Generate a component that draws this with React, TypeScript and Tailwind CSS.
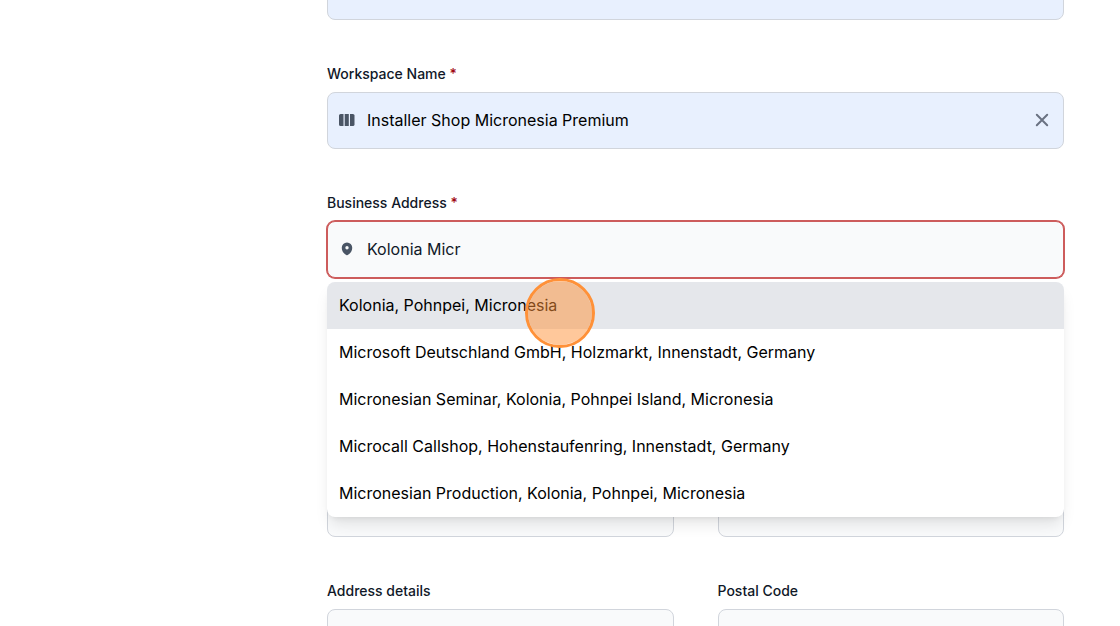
import { useState } from "react";
import type { ReactNode } from "react";
import clsx from "clsx";

const SUGGESTIONS = [
  "Kolonia, Pohnpei, Micronesia",
  "Microsoft Deutschland GmbH, Holzmarkt, Innenstadt, Germany",
  "Micronesian Seminar, Kolonia, Pohnpei Island, Micronesia",
  "Microcall Callshop, Hohenstaufenring, Innenstadt, Germany",
  "Micronesian Production, Kolonia, Pohnpei, Micronesia",
];

function ColumnsIcon() {
  return (
    <svg width="16" height="12" viewBox="0 0 16 12" fill="currentColor" aria-hidden="true">
      <path d="M1.6 0h2.9v12H1.6A1.6 1.6 0 0 1 0 10.4V1.6A1.6 1.6 0 0 1 1.6 0Z" />
      <path d="M5.7 0h4.1v12H5.7z" />
      <path d="M11 0h2.9a1.6 1.6 0 0 1 1.6 1.6v8.8a1.6 1.6 0 0 1-1.6 1.6H11z" />
    </svg>
  );
}

function PinIcon() {
  return (
    <svg width="16" height="15" viewBox="0 0 20 20" fill="currentColor" aria-hidden="true">
      <path
        fillRule="evenodd"
        clipRule="evenodd"
        d="M9.69 18.933l.003.001C9.89 19.02 10 19 10 19s.11.02.308-.066l.002-.001.006-.003.018-.008a5.741 5.741 0 00.281-.14c.186-.096.446-.24.757-.433.62-.384 1.445-.966 2.274-1.765C15.302 14.988 17 12.493 17 9A7 7 0 103 9c0 3.492 1.698 5.988 3.355 7.584a13.731 13.731 0 002.273 1.765 11.842 11.842 0 00.976.544l.062.029.018.008.006.003zM10 11.25a2.25 2.25 0 100-4.5 2.25 2.25 0 000 4.5z"
      />
    </svg>
  );
}

function CloseIcon() {
  return (
    <svg
      width="14"
      height="14"
      viewBox="0 0 14 14"
      fill="none"
      stroke="currentColor"
      strokeWidth="2"
      strokeLinecap="round"
      aria-hidden="true"
    >
      <path d="M1.8 1.8l10.4 10.4M12.2 1.8L1.8 12.2" />
    </svg>
  );
}

type FieldProps = {
  id: string;
  label?: string;
  ariaLabel?: string;
  required?: boolean;
  filled?: boolean;
  active?: boolean;
  icon?: ReactNode;
  value?: string;
  onChange?: (value: string) => void;
  onClear?: () => void;
};

function Field({
  id,
  label,
  ariaLabel,
  required,
  filled,
  active,
  icon,
  value,
  onChange,
  onClear,
}: FieldProps) {
  return (
    <div className="flex flex-col gap-2">
      {label && (
        <label htmlFor={id} className="text-sm font-medium text-gray-900">
          {label}
          {required && <span className="text-red-800"> *</span>}
        </label>
      )}
      <div
        className={clsx(
          "flex h-[57px] items-center rounded-lg border px-[11px] pb-0.5",
          filled ? "bg-[#e8f0fe]" : "bg-gray-50",
          active ? "border-[#cd5c5c] ring-1 ring-[#cd5c5c]" : "border-gray-300"
        )}
      >
        {icon && (
          <span className="flex w-7 shrink-0 text-gray-600">{icon}</span>
        )}
        <input
          id={id}
          type="text"
          aria-label={ariaLabel}
          value={value ?? ""}
          onChange={(e) => onChange?.(e.target.value)}
          className={clsx(
            "min-w-0 flex-1 bg-transparent text-base outline-none",
            filled ? "text-black" : "text-gray-900"
          )}
        />
        {onClear && (
          <button
            type="button"
            aria-label={`Clear ${label}`}
            onClick={onClear}
            className="flex size-5 items-center justify-center text-gray-500"
          >
            <CloseIcon />
          </button>
        )}
      </div>
    </div>
  );
}

export default function App() {
  const [workspace, setWorkspace] = useState("Installer Shop Micronesia Premium");
  const [address, setAddress] = useState("Kolonia Micr");

  return (
    <main className="h-screen overflow-hidden bg-white pr-14 pl-[327px] font-['Inter',sans-serif]">
      <form className="-mt-[37px] flex flex-col gap-11">
        <Field id="company" ariaLabel="Company Name" filled />
        <Field
          id="workspace"
          label="Workspace Name"
          required
          filled
          icon={<ColumnsIcon />}
          value={workspace}
          onChange={setWorkspace}
          onClear={() => setWorkspace("")}
        />
        <div className="relative z-10">
          <Field
            id="address"
            label="Business Address"
            required
            active
            icon={<PinIcon />}
            value={address}
            onChange={setAddress}
          />
          <ul
            role="listbox"
            aria-label="Address suggestions"
            className="absolute inset-x-0 top-full mt-1 overflow-hidden rounded-lg bg-white shadow-lg"
          >
            {SUGGESTIONS.map((item, i) => (
              <li
                key={item}
                role="option"
                aria-selected={i === 0}
                onClick={() => setAddress(item)}
                className={clsx(
                  "flex h-[47px] cursor-pointer items-center px-3 pb-0.5 text-base text-black",
                  i === 0 && "bg-gray-200"
                )}
              >
                {item}
              </li>
            ))}
          </ul>
          {/* click marker over the first suggestion */}
          <span className="pointer-events-none absolute top-[85px] left-[198px] size-[70px] rounded-full border-3 border-[#ff9138] bg-[#ff9138]/50 bg-clip-padding" />
        </div>
        <div className="grid grid-cols-2 gap-x-11 pt-[158px]">
          <Field id="city" ariaLabel="City" />
          <Field id="state" ariaLabel="State" />
        </div>
        <div className="grid grid-cols-2 gap-x-11">
          <Field id="details" label="Address details" />
          <Field id="postal" label="Postal Code" />
        </div>
      </form>
    </main>
  );
}
